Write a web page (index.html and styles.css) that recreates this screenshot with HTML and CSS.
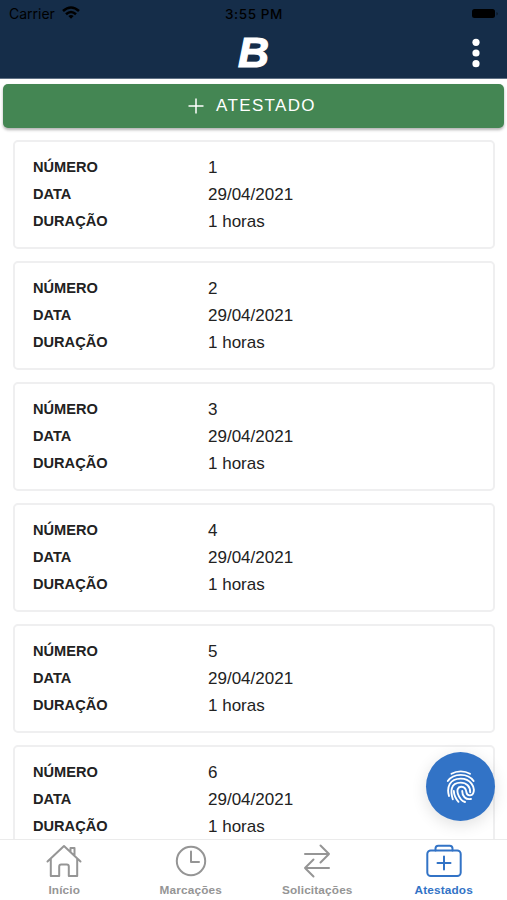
FILE: index.html
```html
<!DOCTYPE html>
<html lang="pt-BR">
<head>
<meta charset="utf-8">
<title>Atestados</title>
<link rel="stylesheet" href="styles.css">
</head>
<body>
<div class="app">
  <header class="header">
    <div class="status">
      <div class="carrier"><span>Carrier</span>
        <svg width="18" height="13" viewBox="0 0 18 13" fill="none" stroke="#000" stroke-width="2.6"><path d="M1 5Q9-2 17 5M4 8.2Q9 3.8 14 8.2"/><path d="M6.3 10Q9 7.8 11.7 10L9 12.7Z" fill="#000" stroke="none"/></svg>
      </div>
      <div class="time">3:55 PM</div>
      <div class="power"><svg width="27" height="10" viewBox="0 0 27 10"><rect width="23" height="9" rx="2.5"/><path d="M24.5 3v3.4q1.3-.5 1.3-1.7t-1.3-1.7" opacity=".5"/></svg></div>
    </div>
    <div class="toolbar">
      <span></span>
      <span class="logo">B</span>
      <svg class="more" width="8" height="30" viewBox="0 0 8 30" fill="#fff"><circle cx="4" cy="4.3" r="3.6"/><circle cx="4" cy="15" r="3.6"/><circle cx="4" cy="25.7" r="3.6"/></svg>
    </div>
  </header>
  <main class="content">
    <button class="add">
      <svg width="16" height="16" viewBox="0 0 16 16" stroke="#fff" stroke-width="1.5"><path d="M8 .5v15M.5 8h15"/></svg>
      <span>ATESTADO</span>
    </button>
    <div class="list">
      <dl class="card"><dt>NÚMERO</dt><dd>1</dd><dt>DATA</dt><dd>29/04/2021</dd><dt>DURAÇÃO</dt><dd>1 horas</dd></dl>
      <dl class="card"><dt>NÚMERO</dt><dd>2</dd><dt>DATA</dt><dd>29/04/2021</dd><dt>DURAÇÃO</dt><dd>1 horas</dd></dl>
      <dl class="card"><dt>NÚMERO</dt><dd>3</dd><dt>DATA</dt><dd>29/04/2021</dd><dt>DURAÇÃO</dt><dd>1 horas</dd></dl>
      <dl class="card"><dt>NÚMERO</dt><dd>4</dd><dt>DATA</dt><dd>29/04/2021</dd><dt>DURAÇÃO</dt><dd>1 horas</dd></dl>
      <dl class="card"><dt>NÚMERO</dt><dd>5</dd><dt>DATA</dt><dd>29/04/2021</dd><dt>DURAÇÃO</dt><dd>1 horas</dd></dl>
      <dl class="card"><dt>NÚMERO</dt><dd>6</dd><dt>DATA</dt><dd>29/04/2021</dd><dt>DURAÇÃO</dt><dd>1 horas</dd></dl>
    </div>
    <div class="fab">
      <svg width="30" height="34" viewBox="0 0 30 34" fill="none" stroke="#fff" stroke-width="1.9" stroke-linecap="round">
        <path d="M5.500 3.800C11 .6 18.500 .6 24 3.800"/>
        <path d="M1.800 11C7.500 2.800 22 2.800 27.600 11"/>
        <path d="M3 26C.5 17.500 3.500 8.600 14.700 8.600C24.500 8.600 29.500 17 27.300 23C26 26.500 21 26 20.500 22.500C20 18.500 18 16.600 15 16.800C11.500 17 10.800 20.500 12 24C13.500 28.500 16 31 19 32"/>
        <path d="M6.800 29.300C4.500 22 4 12.600 14.700 12.600C20.500 12.600 24.300 16.500 24.200 22.300"/>
        <path d="M12.500 31.800C9.500 28.500 8 24.500 7.800 21"/>
        <path d="M16.200 21C16.200 26 19.500 30 25 29"/>
      </svg>
    </div>
  </main>
  <nav class="tabs">
    <a class="tab">
      <svg width="36" height="34" viewBox="0 0 36 34"><path d="M1.500 17.500 18 2l16.500 15.500M4.800 14.500V32h8.400V22.500q0-2 2-2h5.600q2 0 2 2V32h8.400V14.500M24.500 7.800V4h4v7.700"/></svg>
      <span>Início</span>
    </a>
    <a class="tab">
      <svg width="36" height="34" viewBox="0 0 36 34"><circle cx="18" cy="17" r="14.2"/><path d="M18 7.500V18h8"/></svg>
      <span>Marcações</span>
    </a>
    <a class="tab">
      <svg width="36" height="34" viewBox="0 0 36 34"><path d="M6 10h24M21.500 1.500 30 10l-8.500 8.500M30 24H6M14.500 15.500 6 24l8.500 8.500"/></svg>
      <span>Solicitações</span>
    </a>
    <a class="tab active">
      <svg width="36" height="34" viewBox="0 0 36 34"><rect x="1.300" y="6.500" width="33.400" height="25.500" rx="3.500"/><path d="M9.500 6.500V4.500q0-2.800 2.800-2.800h11.400q2.800 0 2.800 2.800v2M18 12.500v13M11.500 19h13"/></svg>
      <span>Atestados</span>
    </a>
  </nav>
</div>
</body>
</html>
```
FILE: styles.css
```css
* { box-sizing: border-box; }
body { margin: 0; font-family: "Liberation Sans", Arial, sans-serif; background: #fff; }
.app { width: 507px; height: 900px; display: flex; flex-direction: column; overflow: hidden; }
.header { height: 79px; flex: none; background: #152d49; border-bottom: 1px solid #5f7084; }
.status { height: 27px; display: grid; grid-template-columns: 1fr auto 1fr; align-items: center; padding: 0 8px 0 9px; font: 14px Inter, sans-serif; color: #000; }
.carrier { display: flex; align-items: center; gap: 7px; }
.carrier svg { margin-top: -2px; }
.time { font-size: 13.5px; font-weight: 500; letter-spacing: .6px; }
.power { display: flex; justify-content: flex-end; }
.toolbar { height: 51px; display: grid; grid-template-columns: 1fr auto 1fr; align-items: center; padding: 0 27px; }
.logo { font-size: 43px; line-height: 46px; margin-top: -1px; font-weight: 700; font-style: italic; color: #fff; -webkit-text-stroke: 1.2px #fff; }
.more { justify-self: end; }
.content { flex: 1; min-height: 0; overflow: hidden; position: relative; padding: 5px 3px 0; }
.add { width: 501px; height: 44px; display: flex; align-items: center; justify-content: center; gap: 12px; padding: 0 3px 0 0; border: 0; border-radius: 5px; background: #448653; color: #fff; font: 17px "Liberation Sans", Arial, sans-serif; letter-spacing: 1.35px; box-shadow: 0 2px 3px rgba(0,0,0,.3); }
.list { padding: 12px 10px 0; display: flex; flex-direction: column; gap: 12px; }
.card { margin: 0; width: 482px; height: 109px; flex: none; border: 2px solid #efeff0; border-radius: 5px; padding: 12px 18px; display: grid; grid-template-columns: 175px 1fr; grid-auto-rows: 27px; line-height: 27px; color: #222; }
.card dt { font-size: 14.6px; font-weight: 700; }
.card dd { margin: 0; font-size: 17px; }
.fab { position: absolute; right: 12px; bottom: 18px; width: 69px; height: 69px; border-radius: 50%; background: #3273c6; display: flex; align-items: center; justify-content: center; box-shadow: 0 4px 16px rgba(0,0,0,.12); }
.tabs { height: 61px; flex: none; border-top: 1px solid #ebebeb; background: #fff; display: grid; grid-template-columns: repeat(4, 1fr); padding-left: 1px; }
.tab { display: flex; flex-direction: column; align-items: center; padding-top: 4px; color: #959595; font-size: 11.8px; font-weight: 700; line-height: 14px; letter-spacing: .15px; }
.tab span { margin-top: 5px; }
.tab svg { fill: none; stroke: currentColor; stroke-width: 2; stroke-linecap: round; stroke-linejoin: round; }
.active { color: #3273c6; }
```
